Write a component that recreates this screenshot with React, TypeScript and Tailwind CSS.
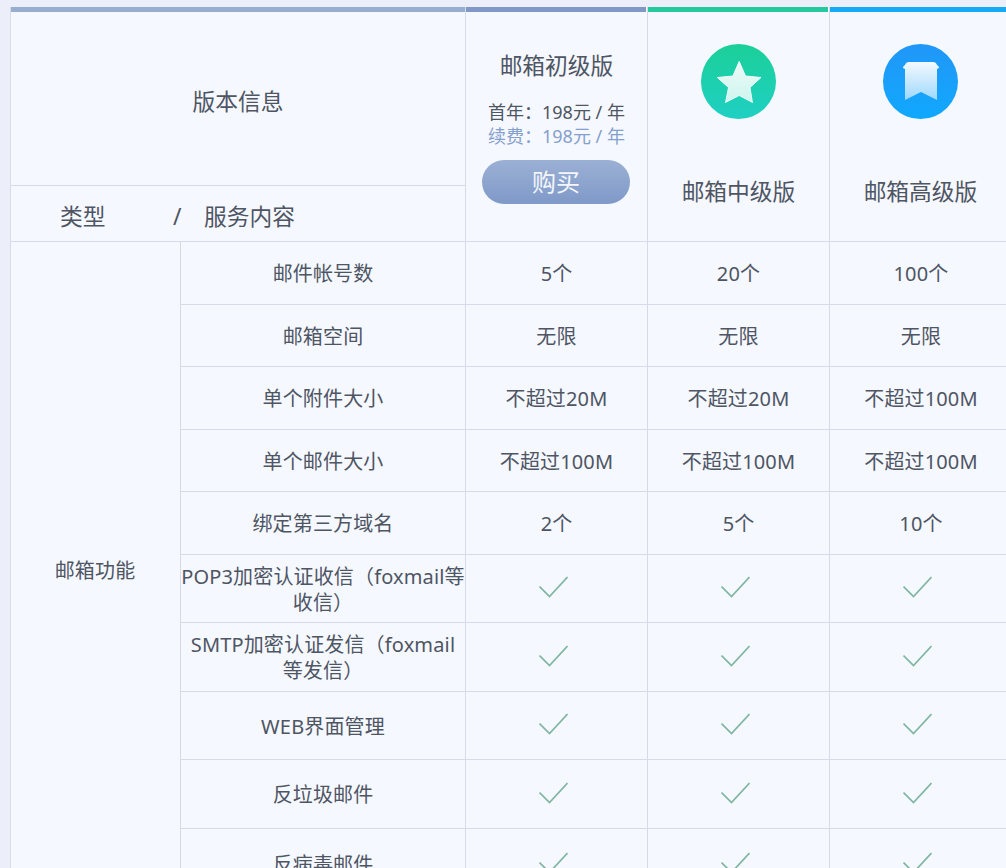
import React from "react";

const font = "font-['Noto_Sans','Noto_Sans_CJK_SC',sans-serif]";
const line = "border-[#d5dbe8]";

function Check() {
  return (
    <svg className="mr-[7px] mb-[3px]" width="29" height="22" viewBox="0 0 29 22" fill="none">
      <path d="M0.5 10.5 L10.5 20.5 L28.5 1" stroke="#7fb69f" strokeWidth="1.7" />
    </svg>
  );
}

function Star() {
  return (
    <div className="w-[75px] h-[75px] rounded-full bg-gradient-to-b from-[#1ccf98] to-[#1fd0c3] flex items-center justify-center">
      <svg width="46" height="44" viewBox="-0.5 -0.5 46 44">
        <defs>
          <linearGradient id="st" x1="0" y1="0" x2="0" y2="1">
            <stop offset="0" stopColor="#ffffff" stopOpacity="0.92" />
            <stop offset="1" stopColor="#ffffff" stopOpacity="0.78" />
          </linearGradient>
        </defs>
        <path d="M22.7 1 L29 15.5 L44.5 17 L33.5 27 L36 42 L22.7 35 L9 42 L12 27 L0.8 17 L16.4 15.5 Z" fill="url(#st)" stroke="url(#st)" strokeWidth="1" strokeLinejoin="round" />
      </svg>
    </div>
  );
}

function Bookmark() {
  return (
    <div className="w-[75px] h-[75px] rounded-full bg-gradient-to-b from-[#2097f8] to-[#0fa8fe] flex items-center justify-center">
      <svg width="38" height="39" viewBox="0 0 38 39">
        <defs>
          <linearGradient id="bm" x1="0" y1="0" x2="0" y2="1">
            <stop offset="0" stopColor="#ffffff" stopOpacity="0.95" />
            <stop offset="1" stopColor="#ffffff" stopOpacity="0.58" />
          </linearGradient>
        </defs>
        <path d="M7 0 H31 Q34 0 35 3 Q37 4 37 6 L35 7 V38 L19 30 L3 38 V7 L1 6 Q1 4 3 3 Q4 0 7 0 Z" fill="url(#bm)" />
      </svg>
    </div>
  );
}

const rows: { name: React.ReactNode; h: string; vals: (string | null)[] }[] = [
  { name: "邮件帐号数", h: "h-[62px]", vals: ["5个", "20个", "100个"] },
  { name: "邮箱空间", h: "h-[62px]", vals: ["无限", "无限", "无限"] },
  { name: "单个附件大小", h: "h-[63px]", vals: ["不超过20M", "不超过20M", "不超过100M"] },
  { name: "单个邮件大小", h: "h-[62px]", vals: ["不超过100M", "不超过100M", "不超过100M"] },
  { name: "绑定第三方域名", h: "h-[63px]", vals: ["2个", "5个", "10个"] },
  { name: <>POP3加密认证收信（foxmail等<br />收信）</>, h: "h-[68px]", vals: [null, null, null] },
  { name: <>SMTP加密认证发信（foxmail<br />等发信）</>, h: "h-[69px]", vals: [null, null, null] },
  { name: "WEB界面管理", h: "h-[68px]", vals: [null, null, null] },
  { name: "反垃圾邮件", h: "h-[69px]", vals: [null, null, null] },
  { name: "反病毒邮件", h: "h-[71px]", vals: [null, null, null] },
];

export default function App() {
  return (
    <div className={`w-[1006px] h-[868px] overflow-hidden bg-[#eceffa] pt-[7px] pl-[10px] text-[20px] leading-[26px] text-[#4e5563] ${font}`}>
      <div className={`w-[1030px] bg-[#f5f8ff] border-l ${line}`}>
        {/* Header */}
        <div className="flex h-[234px]">
          <div className={`w-[455px] shrink-0 border-r ${line} flex flex-col`}>
            <div className="h-[5px] bg-[#98aed0]" />
            <div className={`h-[174px] border-b ${line} flex items-center justify-center pt-[6px] text-[22.75px]`}>版本信息</div>
            <div className="flex-1 flex items-center text-[22.75px] pl-[49px] pt-[6px]">
              <span className="w-[113px]">类型</span>
              <span className="w-[31px]">/</span>
              <span>服务内容</span>
            </div>
          </div>
          <div className={`w-[182px] shrink-0 border-r ${line} flex flex-col items-center`}>
            <div className="h-[5px] self-stretch bg-[#8098c6] mr-[1px]" />
            <div className="mt-[39px] text-[22.75px] leading-[30px]">邮箱初级版</div>
            <div className="mt-[19px] leading-[24px] text-[18px] whitespace-nowrap">首年：198元 / 年</div>
            <div className="leading-[24px] text-[18px] text-[#85a0cc] whitespace-nowrap">续费：198元 / 年</div>
            <div className="mt-[12px] mr-[1px] w-[148px] h-[44px] rounded-full bg-gradient-to-b from-[#9bb0d4] to-[#7f99c8] text-white/90 text-[24px] flex items-center justify-center">购买</div>
          </div>
          <div className={`w-[182px] shrink-0 border-r ${line} flex flex-col items-center`}>
            <div className="h-[5px] self-stretch bg-[#25c79d] mr-[1px]" />
            <div className="mt-[32px]"><Star /></div>
            <div className="mt-[58px] text-[22.75px] leading-[30px]">邮箱中级版</div>
          </div>
          <div className="w-[182px] shrink-0 flex flex-col items-center pr-[1px]">
            <div className="h-[5px] self-stretch bg-[#16a9f5]" />
            <div className="mt-[32px]"><Bookmark /></div>
            <div className="mt-[58px] text-[22.75px] leading-[30px]">邮箱高级版</div>
          </div>
        </div>
        {/* Body */}
        <div className={`flex border-t ${line} tracking-[0.15px]`}>
          <div className={`w-[170px] shrink-0 border-r ${line} flex items-center justify-center pr-[1px] pt-[1px]`}>邮箱功能</div>
          <div className="flex-1">
            {rows.map((r, i) => (
              <div key={i} className={`flex ${r.h} ${i ? `border-t ${line}` : ""}`}>
                <div className={`w-[285px] shrink-0 border-r ${line} flex items-center justify-center text-center pt-[2px] whitespace-nowrap`}>{r.name}</div>
                {r.vals.map((v, j) => (
                  <div key={j} className={`w-[182px] shrink-0 flex items-center justify-center whitespace-nowrap ${v ? "pt-[2px]" : ""} ${j < 2 ? `border-r ${line}` : ""}`}>
                    {v ?? <Check />}
                  </div>
                ))}
              </div>
            ))}
          </div>
        </div>
      </div>
    </div>
  );
}
